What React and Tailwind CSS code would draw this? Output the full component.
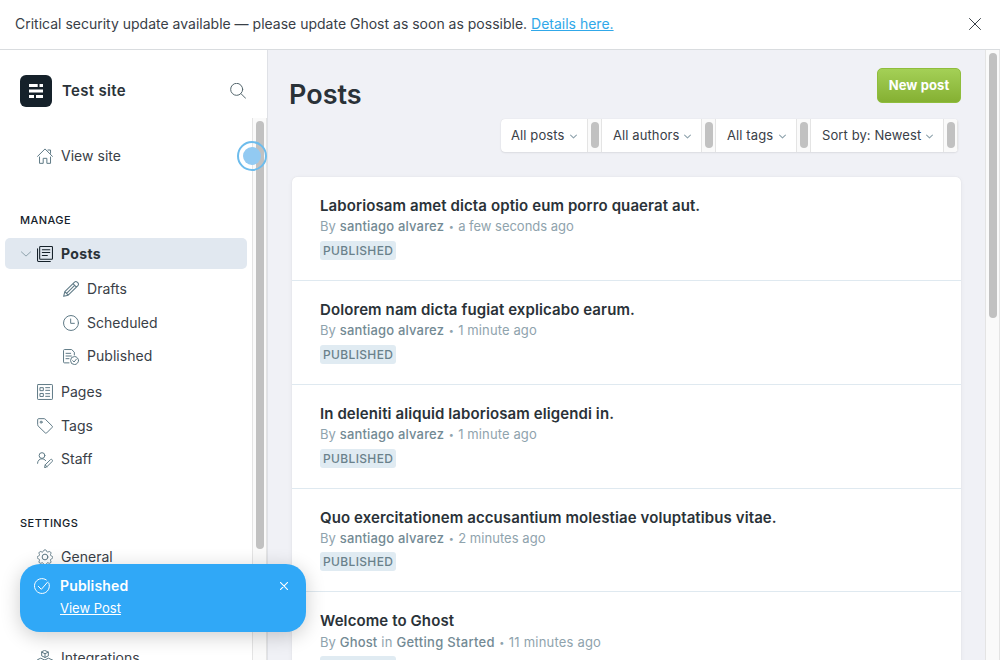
import React from 'react';

const line = {
  fill: 'none',
  stroke: 'currentColor',
  strokeLinecap: 'round',
  strokeLinejoin: 'round',
};

function Icon({ children, className = 'size-4 text-[#5f7a86]', width = 1.5 }) {
  return (
    <svg viewBox="0 0 24 24" className={`shrink-0 ${className}`} {...line} strokeWidth={width}>
      {children}
    </svg>
  );
}

const icons = {
  home: (
    <Icon>
      <path d="M.8 12.6 12 1.4l11.2 11.2M16.5 3h3.8v5M3.8 13.500v9.500h5.500v-7.500h5.500v7.500h5.500v-9.500" />
    </Icon>
  ),
  posts: (
    <Icon className="size-4 text-[#15212A]" width={1.6}>
      <rect x="4" y=".8" width="19.200" height="19.200" rx="1.200" />
      <path d="M.8 4v17.800c0 .8.600 1.400 1.400 1.400H20M8 5.500h11.200M8 9.800h11.200M8 14.200h7.500" />
    </Icon>
  ),
  pencil: (
    <Icon width={1.6}>
      <path d="M1 23l1.700-7L17.300 1.700a2.700 2.700 0 0 1 3.900 0l1.200 1.200a2.700 2.700 0 0 1 0 3.900L7.800 21.300zM2.700 16l5.100 5.300M15 4l5.100 5.100M17.400 6.600 5.400 18.600" />
    </Icon>
  ),
  clock: (
    <Icon>
      <circle cx="12" cy="12" r="11.200" />
      <path d="M11.500 6v6.500H17" />
    </Icon>
  ),
  published: (
    <Icon>
      <path d="M9 20.800H2.200A1.400 1.400 0 0 1 .8 19.400V2.200C.8 1.400 1.400.8 2.200.8H13l4 4V9M4.500 6.500h7M4.500 10.500h8M4.500 14.500h4.500" />
      <circle cx="17.300" cy="17.300" r="6" />
      <path d="m14.600 17.500 2 2 3.500-4.300" />
    </Icon>
  ),
  pages: (
    <Icon>
      <rect x=".8" y=".8" width="22.400" height="22.400" rx="1" />
      <path d="M5 5.500h4.500V10H5zM5 14.200h4.500v4.500H5zM13 5.500h6M13 9.500h6M13 14.500h6M13 18.500h6" />
    </Icon>
  ),
  tag: (
    <Icon>
      <path d="M1 2.200C1 1.500 1.500 1 2.200 1h8.300c.7 0 1.300.300 1.800.700L22.700 12a1.500 1.500 0 0 1 0 2.100l-8.200 8.300a1.500 1.500 0 0 1-2.100 0L1.700 12c-.4-.5-.7-1.100-.7-1.800z" />
      <circle cx="6.200" cy="6.200" r="1.500" />
    </Icon>
  ),
  staff: (
    <Icon>
      <circle cx="7.500" cy="5.300" r="4.300" />
      <path d="M.8 17c0-4 3-6.800 6.700-6.800 2.200 0 4.200 1 5.400 2.700M11.500 23l.7-3.600 7.800-7.800c.8-.8 2-.8 2.700 0 .7.700.7 1.900 0 2.700L15 22zM12.200 19.400 15 22" />
    </Icon>
  ),
  gear: (
    <Icon>
      <circle cx="12" cy="12" r="4.300" />
      <path d="M9.700 2.200c.7-1.900 3.900-1.900 4.600 0l.5 1.300c.3.900 1.300 1.300 2.100.9l1.300-.6c1.900-.8 4.100 1.400 3.200 3.200l-.6 1.300c-.4.900 0 1.900.9 2.200l1.300.4c1.900.7 1.900 3.500 0 4.200l-1.300.5c-.9.300-1.300 1.300-.9 2.100l.6 1.300c.9 1.900-1.300 4.100-3.200 3.200l-1.300-.6c-.8-.4-1.800 0-2.100.9l-.5 1.300c-.7 1.900-3.900 1.900-4.600 0l-.5-1.300c-.3-.9-1.300-1.300-2.100-.9l-1.300.6c-1.900.9-4.100-1.300-3.200-3.200l.6-1.300c.4-.8 0-1.800-.9-2.100L1 15.100c-1.900-.7-1.900-3.500 0-4.200l1.300-.4c.9-.3 1.300-1.300.9-2.200L2.600 7C1.700 5.200 3.900 3 5.800 3.800l1.300.6c.8.4 1.800 0 2.100-.9z" transform="translate(.7 .4) scale(.94)" />
    </Icon>
  ),
  cubes: (
    <Icon>
      <path d="m12 .8 5 2.400v5.600l-5 2.400-5-2.400V3.200zM7 3.200l5 2.400 5-2.400M12 5.600v5.600M6.200 12.500l5 2.400v5.600l-5 2.400-5-2.400v-5.600zM1.200 14.900l5 2.400 5-2.400M6.200 17.300v5.600M17.800 12.500l5 2.400v5.600l-5 2.400-5-2.400v-5.600zM12.800 14.900l5 2.400 5-2.400M17.800 17.300v5.600" />
    </Icon>
  ),
};

function NavItem({ icon, label, className = 'h-[34px] pl-[37px]' }) {
  return (
    <a className={`flex shrink-0 items-center text-[14px] tracking-[0.03px] text-[#394047] ${className}`}>
      {icons[icon]}
      <span className="ml-2 pb-[2px]">{label}</span>
    </a>
  );
}

function NavHeading({ children }) {
  return (
    <h5 className="mt-[30px] flex h-[34px] shrink-0 items-center pl-5 text-[11px] font-medium tracking-[0.45px] text-[#15212A]">
      {children}
    </h5>
  );
}

function Scrollbar({ className = '', thumb }) {
  return (
    <div className={`flex w-[15px] shrink-0 justify-center border-x border-[#e4e4e4] bg-[#fafafa] pt-[3px] ${className}`}>
      <div className={`w-2 rounded-full bg-[#c1c1c1] ${thumb}`} />
    </div>
  );
}

function Sidebar() {
  return (
    <aside className="flex w-[268px] shrink-0 flex-col border-r border-[#dfe1e6] bg-white">
      <header className="flex h-[68px] shrink-0 items-center pt-[14px] pr-[21px] pl-5">
        <div className="flex size-8 items-center justify-center rounded-[6px] bg-[#15212A]">
          <svg viewBox="0 0 14 14" className="size-[14px]" fill="#fff">
            <path d="M0 0h8.700v3H0zM10.500 0H14v3h-3.500zM0 5.500h14v3H0zM0 11h5v3H0zM7 11h7v3H7z" />
          </svg>
        </div>
        <span className="ml-[10px] flex-1 text-[15px] font-semibold tracking-[0.32px] text-[#2a3238]">Test site</span>
        <Icon className="size-4 text-[#54666d]" width={1.5}>
          <circle cx="10" cy="9.500" r="9" />
          <path d="m16.500 16 7 7" />
        </Icon>
      </header>
      <div className="flex min-h-0 flex-1">
        <nav className="flex min-w-0 flex-1 flex-col overflow-hidden pt-[21px]">
          <NavItem icon="home" label="View site" />
          <NavHeading>MANAGE</NavHeading>
          <a className="mt-px mr-[5px] ml-[5px] flex h-[31px] shrink-0 items-center rounded-[5px] bg-[#e1e8f0] pl-4 text-[14px] font-bold tracking-[0.35px] text-[#2a3238]">
            <Icon className="mr-[6px] size-[10px] text-[#8fa3ad]" width={2.4}>
              <path d="m1 7 11 10L23 7" />
            </Icon>
            {icons.posts}
            <span className="ml-2">Posts</span>
          </a>
          <NavItem icon="pencil" label="Drafts" className="mt-[3px] h-[34px] pl-[63px]" />
          <NavItem icon="clock" label="Scheduled" className="h-[34px] pl-[63px]" />
          <NavItem icon="published" label="Published" className="h-[33px] pl-[63px]" />
          <NavItem icon="pages" label="Pages" className="mt-[2px] h-[34px] pl-[37px]" />
          <NavItem icon="tag" label="Tags" />
          <NavItem icon="staff" label="Staff" className="h-[33px] pl-[37px]" />
          <NavHeading>SETTINGS</NavHeading>
          <NavItem icon="gear" label="General" />
          <NavItem icon="cubes" label="Integrations" className="mt-[67px] h-[34px] pl-[37px]" />
        </nav>
        <Scrollbar thumb="h-[428px]" />
      </div>
    </aside>
  );
}

function Filter({ label, className }) {
  return (
    <div className="flex">
      <div className={`flex items-center justify-between pr-[10px] ${className}`}>
        <span className="whitespace-nowrap">{label}</span>
        <Icon className="mt-px size-[7px] text-[#8fa3ad]" width={3.8}>
          <path d="m2 7 10 10L22 7" />
        </Icon>
      </div>
      <Scrollbar thumb="h-[26px]" />
    </div>
  );
}

const posts = [
  { title: 'Laboriosam amet dicta optio eum porro quaerat aut.', author: 'santiago alvarez', time: 'a few seconds ago', row: 'h-[104px]', badge: 'mt-[5px]', timing: 'leading-[19px] tracking-[-0.02px]' },
  { title: 'Dolorem nam dicta fugiat explicabo earum.', author: 'santiago alvarez', time: '1 minute ago', row: 'h-[104px]', badge: 'mt-[5px]', timing: 'leading-[19px] tracking-[0.12px]' },
  { title: 'In deleniti aliquid laboriosam eligendi in.', author: 'santiago alvarez', time: '1 minute ago', row: 'h-[104px]', badge: 'mt-[5px]', timing: 'leading-[19px] tracking-[0.12px]' },
  { title: 'Quo exercitationem accusantium molestiae voluptatibus vitae.', author: 'santiago alvarez', time: '2 minutes ago', row: 'h-[103px]', badge: 'mt-1', timing: 'leading-[19px] tracking-[0.05px]' },
  { title: 'Welcome to Ghost', author: 'Ghost', tag: 'Getting Started', time: '11 minutes ago', row: 'h-[104px]', badge: 'mt-[3px]', timing: 'leading-[21px] tracking-[0.2px]' },
];

function PostRow({ post }) {
  return (
    <li className={`flex shrink-0 flex-col items-start border-b border-[#dfe9f0] pt-[18px] pl-7 ${post.row}`}>
      <h3 className="text-[15px] leading-[22px] font-semibold tracking-[0.1px] text-[#2a3238]">{post.title}</h3>
      <p className={`flex items-center text-[13px] text-[#8fa3ad] ${post.timing}`}>
        <span className="tracking-[0.1px] whitespace-pre">By </span>
        <span className="font-medium tracking-[0.17px] text-[#738a94]">{post.author}</span>
        {post.tag && (
          <>
            <span className="whitespace-pre"> in </span>
            <span className="font-medium tracking-[0.3px] text-[#738a94]">{post.tag}</span>
          </>
        )}
        <span className="w-[14px] text-center text-[9px] tracking-normal">•</span>
        {post.time}
      </p>
      <span className={`flex h-[19px] w-[76px] items-center rounded-[3px] bg-[#e0ebf2] px-[3px] text-[12px] font-medium tracking-[0.35px] text-[#6a818b] ${post.badge}`}>
        PUBLISHED
      </span>
    </li>
  );
}

function Toast() {
  return (
    <div className="absolute top-[564px] left-5 flex h-[68px] w-[286px] rounded-[20px] bg-[#30a8f7] pt-[13px] pl-[14px] text-white shadow-[0_4px_20px_rgba(0,0,0,0.2)]">
      <Icon className="mt-[1px] size-4 text-white" width={1.5}>
        <path d="M22.200 7.500A11.200 11.200 0 1 1 18.500 2.900" />
        <path d="m6.500 12.500 4.500 4.500L20.500 6" />
      </Icon>
      <div className="ml-[10px] flex flex-1 flex-col">
        <span className="text-[14px] leading-[18px] font-semibold tracking-[0.15px]">Published</span>
        <a className="mt-1 text-[13px] leading-[18px] underline">View Post</a>
      </div>
      <Icon className="mt-[5px] mr-[18px] size-2 text-white" width={3.300}>
        <path d="m1 1 22 22M23 1 1 23" />
      </Icon>
    </div>
  );
}

export default function App() {
  return (
    <div className="relative flex h-[660px] w-[1000px] flex-col overflow-hidden bg-[#f0f1f6] font-['Inter',sans-serif]">
      <div className="flex h-[50px] shrink-0 items-center border-b border-[#d9dcdf] bg-white pr-[19px] pl-[15px] text-[14px] text-[#394047]">
        <p className="flex-1 pb-[2px]">
          Critical security update available — please update Ghost as soon as possible.{' '}
          <a className="text-[#30a8e9] underline">Details here.</a>
        </p>
        <Icon className="mb-px size-3 text-[#394047]" width={2}>
          <path d="m1 1 22 22M23 1 1 23" />
        </Icon>
      </div>
      <div className="flex min-h-0 flex-1">
        <Sidebar />
        <main className="flex min-w-0 flex-1 flex-col overflow-hidden pr-6 pl-6">
          <header className="flex h-[69px] shrink-0 justify-between pt-[18px]">
            <h1 className="-ml-[3px] pt-[7px] text-[27px] leading-10 font-semibold text-[#2a3238]">Posts</h1>
            <button className="flex h-[35px] w-[84px] items-center justify-center rounded-[5px] border border-[#8fbd3c] bg-gradient-to-b from-[#a4d056] to-[#85b032] text-[13px] font-bold tracking-[0.1px] text-white">
              New post
            </button>
          </header>
          <div className="mr-[3px] flex h-[33px] shrink-0 self-end overflow-hidden rounded-[4px] bg-white text-[13px] tracking-[0.1px] text-[#394047] shadow-[0_0_1px_rgba(0,0,0,0.15),0_1px_2px_rgba(0,0,0,0.08)]">
            <Filter label="All posts" className="w-[86px] pl-[10px]" />
            <Filter label="All authors" className="w-[99px] pl-[11px]" />
            <Filter label="All tags" className="w-[80px] pl-[11px]" />
            <Filter label="Sort by: Newest" className="w-[132px] pl-[11px]" />
          </div>
          <ol className="mt-[25px] flex shrink-0 flex-col rounded-[5px] bg-white shadow-[0_0_1px_rgba(0,0,0,0.12),0_1px_5px_rgba(0,0,0,0.05)]">
            {posts.map((post) => (
              <PostRow key={post.title} post={post} />
            ))}
          </ol>
        </main>
        <Scrollbar thumb="h-[265px]" />
      </div>
      <div className="absolute top-[141px] left-[237px] flex size-[30px] items-center justify-center rounded-full border-2 border-[#6dbcec]">
        <div className="size-[18px] rounded-full bg-[#92caf2]" />
      </div>
      <Toast />
    </div>
  );
}
